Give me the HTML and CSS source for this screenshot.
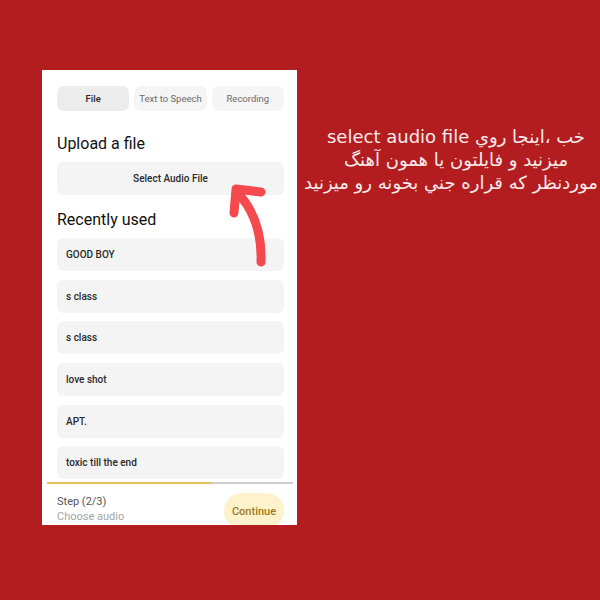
FILE: index.html
```html
<!DOCTYPE html>
<html lang="en">
<head>
  <meta charset="UTF-8" />
  <meta name="viewport" content="width=device-width, initial-scale=1.0" />
  <title>Choose audio</title>
  <link rel="stylesheet" href="styles.css">
</head>
<body>
  <div class="phone">
    <div class="tabs">
      <div class="tab active">File</div>
      <div class="tab">Text to Speech</div>
      <div class="tab">Recording</div>
    </div>

    <h2 class="section-title upload-title">Upload a file</h2>
    <div class="select-btn">Select Audio File</div>

    <h2 class="section-title recent-title">Recently used</h2>
    <div class="recent-list">
      <div class="recent-item">GOOD BOY</div>
      <div class="recent-item">s class</div>
      <div class="recent-item">s class</div>
      <div class="recent-item">love shot</div>
      <div class="recent-item">APT.</div>
      <div class="recent-item">toxic till the end</div>
    </div>

    <div class="progress">
      <div class="progress-fill" style="width: 66.7%"></div>
    </div>

    <div class="footer">
      <div class="step">
        <div class="step-count">Step (2/3)</div>
        <div class="step-name">Choose audio</div>
      </div>
      <div class="continue-btn">Continue</div>
    </div>

    <!-- hand drawn arrow pointing at the button -->
    <svg class="arrow" width="255" height="455" viewBox="0 0 255 455">
      <path d="M219 192 C220 166, 213 142, 196 123" />
      <path d="M192 143 L194 119 L219 122" />
    </svg>
  </div>

  <div class="note" dir="rtl">
    <div class="note-line">خب ،اینجا روي select audio file</div>
    <div class="note-line">میزنید و فایلتون یا همون آهنگ</div>
    <div class="note-line">موردنظر که قراره جني بخونه رو میزنید</div>
  </div>
</body>
</html>
```

FILE: styles.css
```css
body {
    margin: 0;
    width: 600px;
    height: 600px;
    overflow: hidden;
    background: #b41d1f;
    display: flex;
    align-items: flex-start;
    padding: 70px 0 0 42px;
    box-sizing: border-box;
    font-family: Roboto, "Liberation Sans", sans-serif;
}

/* Phone screen */
.phone {
    position: relative;
    flex: none;
    width: 255px;
    height: 455px;
    background: #fff;
    overflow: hidden;
    display: flex;
    flex-direction: column;
}

.tabs {
    display: grid;
    grid-template-columns: repeat(3, 1fr);
    gap: 5px;
    margin: 16px 13px 0 15px;
}

.tab {
    height: 25px;
    border-radius: 7px;
    background: #f5f5f5;
    color: #6b6b6b;
    font-size: 9.5px;
    display: flex;
    align-items: center;
    justify-content: center;
}

.tab.active {
    background: #ececec;
    color: #262626;
    font-weight: 500;
}

.section-title {
    margin: 0 13px 0 15px;
    font-size: 16px;
    line-height: 20px;
    font-weight: 400;
    color: #111;
}

.upload-title {
    margin-top: 23px;
}

.select-btn {
    margin: 8px 13px 0 15px;
    height: 33px;
    border-radius: 6px;
    background: #f4f4f4;
    color: #2a2a2a;
    font-size: 10px;
    font-weight: 500;
    display: flex;
    align-items: center;
    justify-content: center;
}

.recent-title {
    margin-top: 15px;
}

.recent-list {
    flex: 1;
    min-height: 0;
    overflow: hidden;
    margin: 8px 13px 0 15px;
    display: flex;
    flex-direction: column;
    gap: 8.7px;
}

.recent-item {
    flex: none;
    height: 33px;
    border-radius: 6px;
    background: #f4f4f4;
    color: #2a2a2a;
    font-size: 10px;
    font-weight: 500;
    padding-left: 9px;
    display: flex;
    align-items: center;
}

.progress {
    flex: none;
    height: 2px;
    margin: 1px 4px 0 5px;
    background: #cdcdcd;
}

.progress-fill {
    height: 100%;
    background: #e6c15c;
}

.footer {
    flex: none;
    height: 41px;
    box-sizing: border-box;
    display: flex;
    justify-content: space-between;
    align-items: flex-start;
    padding: 9px 13px 0 15px;
}

.step {
    padding-top: 1px;
    font-size: 11px;
    line-height: 15px;
}

.step-count {
    color: #555;
}

.step-name {
    color: #a5a5a5;
}

.continue-btn {
    flex: none;
    width: 60px;
    height: 36px;
    border-radius: 18px;
    background: #fdf2cc;
    color: #9c7a22;
    font-size: 11px;
    font-weight: 500;
    display: flex;
    align-items: center;
    justify-content: center;
}

.arrow {
    position: absolute;
    left: 0;
    top: 0;
    pointer-events: none;
}

.arrow path {
    fill: none;
    stroke: #f4494f;
    stroke-width: 9;
    stroke-linecap: round;
    stroke-linejoin: round;
}

/* Persian caption on the right */
.note {
    flex: none;
    width: 284px;
    margin: 55px 0 0 17px;
    color: #f8ecec;
    font-family: "DejaVu Sans", sans-serif;
    font-size: 18px;
    line-height: 23px;
    text-align: center;
}

.note-line {
    white-space: nowrap;
}
```
